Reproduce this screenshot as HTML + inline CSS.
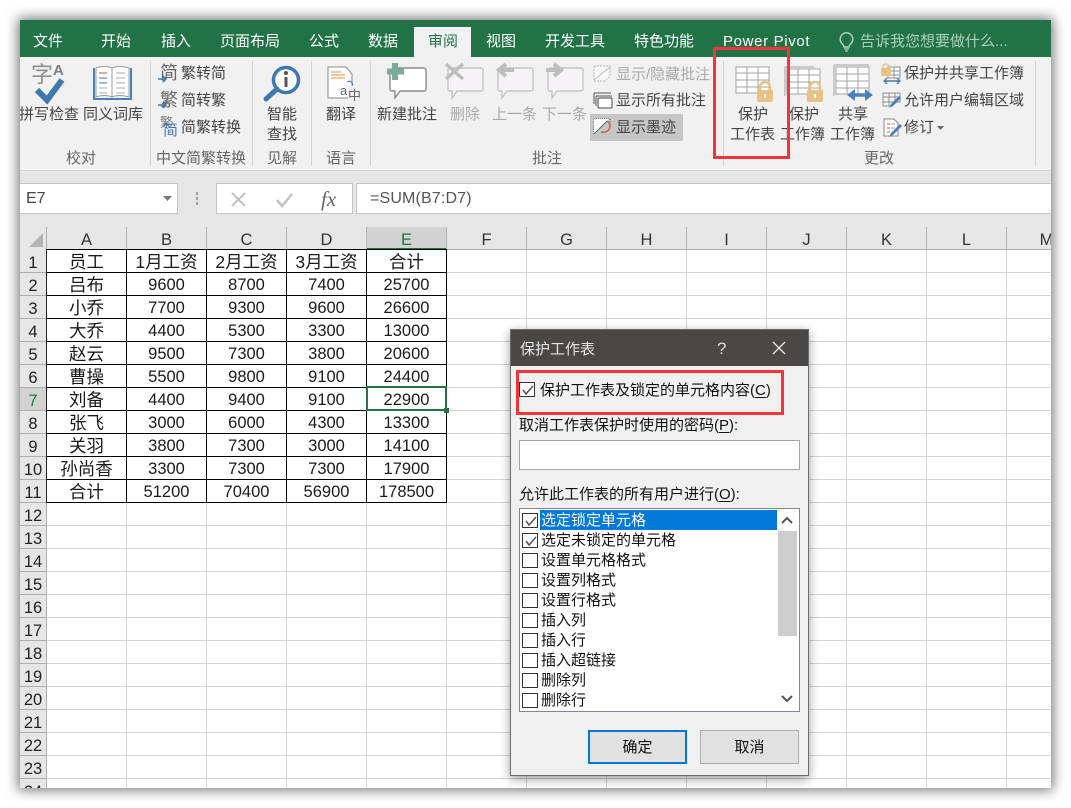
<!DOCTYPE html>
<html lang="zh"><head><meta charset="utf-8">
<style>
html,body{margin:0;padding:0;width:1071px;height:808px;background:#fff;overflow:hidden}
body{font-family:"Liberation Sans","Noto Sans CJK SC",sans-serif;position:relative}
#win{position:absolute;left:20px;top:20px;width:1031px;height:768px;overflow:hidden;background:#fff}
#shadow{position:absolute;left:20px;top:20px;width:1031px;height:768px;box-shadow:0 0 12px 2px rgba(0,0,0,.55)}
.a{position:absolute}
.t{position:absolute;white-space:nowrap;font-size:15px;line-height:20px;color:#444;margin-top:1px}
.g{color:#a9a9a9}
.tab{position:absolute;white-space:nowrap;font-size:15px;line-height:20px;color:#fff;top:12px}
.lab{position:absolute;white-space:nowrap;font-size:15px;line-height:20px;color:#666;top:129px}
.sep{position:absolute;top:41px;height:105px;width:1px;background:#d2d2d2}
.ch{position:absolute;top:207px;height:22px;width:79px;border-right:1px solid #b5b5b5;text-align:center;font-size:16.5px;line-height:26px;color:#333}
.rh{position:absolute;left:0;width:26px;height:22px;border-bottom:1px solid #aeaeae;text-align:center;font-size:16.5px;line-height:26px;color:#222}
#grid{position:absolute;left:27px;top:230px;width:1004px;height:540px;background-image:linear-gradient(to left,#d4d4d4 1px,transparent 1px),linear-gradient(to top,#d4d4d4 1px,transparent 1px);background-size:80px 23px}
#tb{position:absolute;left:26px;top:229px;border-left:1px solid #222;border-top:1px solid #000;display:grid;grid-template-columns:repeat(5,80px);grid-auto-rows:23px;background:#fff}
#tb div{box-sizing:border-box;border-right:1px solid #000;border-bottom:1px solid #000;text-align:center;font-size:16.5px;line-height:25px;color:#1a1a1a}
#tb div.c{font-size:17.5px;line-height:24px}
#dlg{position:absolute;left:510px;top:329px;width:297px;height:445px;border:1px solid #6b6b6b;background:#f0f0f0;box-shadow:0 3px 10px rgba(0,0,0,.4);font-size:15px;color:#111}
#dlg .d{position:absolute;white-space:nowrap;line-height:20px;font-size:15px;color:#111;margin-top:1px}
.cb{position:absolute;box-sizing:border-box;left:11px;width:16px;height:15px;border:1px solid #333;background:#fff}
.cb svg{position:absolute;left:1px;top:0}
.it{position:absolute;left:30px;white-space:nowrap;line-height:20px;font-size:15px;color:#111;margin-top:1px}
u{text-underline-offset:2px}
</style></head><body>
<div id="shadow"></div>
<div id="win">
<div class="a" style="left:0;top:0;width:1031px;height:37px;background:#217346"></div>
<div class="a" style="left:394px;top:7px;width:57px;height:30px;background:#f1f1f1"></div>
<span class="tab" style="left:13px">文件</span>
<span class="tab" style="left:81px">开始</span>
<span class="tab" style="left:141px">插入</span>
<span class="tab" style="left:200px">页面布局</span>
<span class="tab" style="left:289px">公式</span>
<span class="tab" style="left:348px">数据</span>
<span class="tab" style="left:408px;color:#217346">审阅</span>
<span class="tab" style="left:466px">视图</span>
<span class="tab" style="left:525px">开发工具</span>
<span class="tab" style="left:614px">特色功能</span>
<span class="tab" style="left:703px;letter-spacing:.65px">Power Pivot</span>
<span class="tab" style="left:840px;color:#a9d0ba">告诉我您想要做什么...</span>

<div class="a" style="left:0;top:37px;width:1031px;height:113px;background:#f1f1f1;border-bottom:1px solid #d4d4d4"></div>
<div class="a" style="left:0;top:151px;width:1031px;height:78px;background:#e6e6e6"></div>
<div class="sep" style="left:130px"></div><div class="sep" style="left:232px"></div><div class="sep" style="left:291px"></div><div class="sep" style="left:350px"></div><div class="sep" style="left:703px"></div><div class="sep" style="left:1015px"></div>

<span class="t" style="left:-1px;top:84px">拼写检查</span>
<span class="t" style="left:63px;top:84px">同义词库</span>
<span class="t" style="left:161px;top:43px">繁转简</span>
<span class="t" style="left:161px;top:70px">简转繁</span>
<span class="t" style="left:161px;top:97px">简繁转换</span>
<span class="t" style="left:247px;top:84px">智能</span>
<span class="t" style="left:247px;top:104px">查找</span>
<span class="t" style="left:306px;top:84px">翻译</span>
<span class="t" style="left:357px;top:84px">新建批注</span>
<span class="t g" style="left:430px;top:84px">删除</span>
<span class="t g" style="left:472px;top:84px">上一条</span>
<span class="t g" style="left:522px;top:84px">下一条</span>
<div class="a" style="left:570px;top:94px;width:93px;height:27px;background:#c6c6c6"></div>
<span class="t g" style="left:596px;top:44px">显示/隐藏批注</span>
<span class="t" style="left:596px;top:70px">显示所有批注</span>
<span class="t" style="left:596px;top:97px">显示墨迹</span>
<span class="t" style="left:718px;top:84px">保护</span>
<span class="t" style="left:710px;top:104px">工作表</span>
<span class="t" style="left:769px;top:84px">保护</span>
<span class="t" style="left:760px;top:104px">工作簿</span>
<span class="t" style="left:818px;top:84px">共享</span>
<span class="t" style="left:810px;top:104px">工作簿</span>
<span class="t" style="left:884px;top:43px">保护并共享工作簿</span>
<span class="t" style="left:884px;top:70px">允许用户编辑区域</span>
<span class="t" style="left:884px;top:97px">修订</span>
<span class="lab" style="left:46px">校对</span>
<span class="lab" style="left:136px">中文简繁转换</span>
<span class="lab" style="left:247px">见解</span>
<span class="lab" style="left:306px">语言</span>
<span class="lab" style="left:512px">批注</span>
<span class="lab" style="left:844px">更改</span>

<svg class="a" style="left:-20px;top:-20px" width="1071" height="240" viewBox="0 0 1071 240" fill="none">
<!-- bulb -->
<path d="M842.500 44a6.300 6.300 0 1 1 8 0c-1 1-1.500 2-1.500 3h-5c0-1-.5-2-1.500-3z" stroke="#b5d4c3" stroke-width="1.400"/><path d="M844 49h5M845 51h3" stroke="#b5d4c3" stroke-width="1.300"/>
<!-- spelling -->
<text x="31" y="82" font-size="22" fill="#8e8e8e" font-family="Noto Sans CJK SC">字</text>
<text x="53" y="75" font-size="15" font-weight="bold" fill="#808080" font-family="Liberation Sans">A</text>
<path d="M37 90l10 10 15-20" stroke="#3f78ad" stroke-width="6"/>
<!-- book -->
<path d="M94 68v31h37V68" stroke="#4a80b8" stroke-width="2"/><path d="M96 68c5-2 12-2 16 0v29c-4-2-11-2-16 0zM112 68c4-2 11-2 17 0v29c-6-2-13-2-17 0z" fill="#fff" stroke="#9a9a9a"/>
<path d="M99 73h8" stroke="#d2592a"/><path d="M99 78h8M99 83h8" stroke="#3f78ad"/><path d="M99 88h8M99 93h8M116 73h9M116 78h9M116 83h9M116 88h9M116 93h9" stroke="#aaa"/>
<!-- chinese conv -->
<text x="160" y="79" font-size="18" fill="#666" font-family="Noto Sans CJK SC">简</text>
<text x="160" y="106" font-size="18" fill="#666" font-family="Noto Sans CJK SC">繁</text>
<text x="160" y="127" font-size="13" fill="#777" font-family="Noto Sans CJK SC">繁</text>
<text x="163" y="135" font-size="15" fill="#3f78ad" font-family="Noto Sans CJK SC">简</text>
<path d="M158 79h8M163 76l3 3-3 3M158 105h8M163 102l3 3-3 3" stroke="#3f78ad" stroke-width="1.600"/>
<!-- smart lookup -->
<circle cx="286" cy="80" r="12.500" fill="#fff" stroke="#3f78ad" stroke-width="3.500"/>
<path d="M266 99l11-10" stroke="#3f78ad" stroke-width="5" stroke-linecap="round"/>
<circle cx="286" cy="73" r="2" fill="#555"/><path d="M286 77v10" stroke="#555" stroke-width="3"/>
<!-- translate -->
<path d="M328 67h18l6 7v24h-24z" fill="#fff" stroke="#888"/><path d="M331 72h10M331 75h14M331 78h14" stroke="#e08a3c"/>
<path d="M347 82c3-2 5 0 6 3" stroke="#3f78ad"/>
<rect x="348" y="86" width="13" height="14" fill="#f1f1f1"/>
<text x="340" y="95" font-size="13" fill="#666" font-family="Liberation Sans">a</text>
<text x="348" y="100" font-size="13" fill="#666" font-family="Noto Sans CJK SC">中</text>
<!-- comments -->
<path d="M393 68h29a2 2 0 0 1 2 2v19a2 2 0 0 1-2 2h-24l-5 7v-7h-3a2 2 0 0 1-2-2V70" fill="#fff" stroke="#8a8a8a" stroke-width="1.400" transform="translate(2 0)"/>
<path d="M395 63v17M387 71.500h17" stroke="#7cab9b" stroke-width="6"/>
<g stroke="#c6c3c6" stroke-width="1.400" fill="#f5f3f5"><path d="M450 68h31a2 2 0 0 1 2 2v19a2 2 0 0 1-2 2h-24l-5 7v-7h-2a2 2 0 0 1-2-2V70a2 2 0 0 1 2-2z"/><path d="M500 68h31a2 2 0 0 1 2 2v19a2 2 0 0 1-2 2h-24l-5 7v-7h-2a2 2 0 0 1-2-2V70a2 2 0 0 1 2-2z"/><path d="M550 68h31a2 2 0 0 1 2 2v19a2 2 0 0 1-2 2h-24l-5 7v-7h-2a2 2 0 0 1-2-2V70a2 2 0 0 1 2-2z"/></g>
<path d="M446 64l17 15M463 64l-17 15" stroke="#bdbdbd" stroke-width="3.500"/>
<path d="M514 70h-13M506 64l-7 6 7 6" stroke="#bdbdbd" stroke-width="4"/>
<path d="M546 70h13M554 64l7 6-7 6" stroke="#bdbdbd" stroke-width="4"/>
<!-- show/hide -->
<path d="M594 66h16v10l-5 5h-11z" stroke="#b5b5b5" stroke-dasharray="2 1" fill="#f8f8f8"/><path d="M594 80l16-13" stroke="#bbb"/>
<path d="M594 93h17M594 93v11M596 96h16M596 96v10" stroke="#555"/><rect x="598" y="98" width="14" height="10" rx="1" fill="#fff" stroke="#444"/>
<path d="M594 119h16v5M594 119v15" stroke="#555" stroke-dasharray="1 1"/><path d="M594 119h15l-15 15z" fill="#fff"/><path d="M594 134l13-13" stroke="#666"/><path d="M607 121a7 7 0 0 1 3 6c-1 4-5 6-9 5" stroke="#d9552b" stroke-width="1.300"/>
<!-- protect sheet -->
<g stroke="#a3a3a3" fill="#fff"><path d="M736 67h33v26h-33z"/><path d="M736 73h33M736 80h33M736 87h33M747 67v26M758 67v26"/></g>
<g stroke="#a3a3a3"><path d="M785 67h29" /><path d="M785 67v29"/></g>
<g stroke="#a3a3a3" fill="#fff"><path d="M787 69h33v25h-33z"/><path d="M787 75h33M787 82h33M787 88h33M798 69v25M809 69v25"/></g>
<g stroke="#a3a3a3"><path d="M834 65h35M834 65v31"/></g>
<g stroke="#a3a3a3" fill="#fff"><path d="M836 67h33v27h-33z"/><path d="M836 74h33M836 81h33M836 88h33M847 67v27M858 67v27"/></g>
<rect x="757" y="90" width="16" height="12" rx="1.500" fill="#e8c283"/><path d="M760 90v-3a5 5 0 0 1 10 0v3" stroke="#e8c283" stroke-width="2.600"/><path d="M765 94v4" stroke="#fff" stroke-width="2"/>
<rect x="807" y="90" width="16" height="12" rx="1.500" fill="#e8c283"/><path d="M810 90v-3a5 5 0 0 1 10 0v3" stroke="#e8c283" stroke-width="2.600"/><path d="M815 94v4" stroke="#fff" stroke-width="2"/>
<path d="M850 95h20" stroke="#4a80b8" stroke-width="3.500"/><path d="M855 89l-8 6 8 6zM865 89l8 6-8 6z" fill="#4a80b8"/>
<!-- small icons -->
<g stroke="#8f8f8f" fill="#fff"><path d="M888 67h12v11h-12z"/><path d="M888 71h12M888 75h12M894 67v11"/></g>
<rect x="881" y="68" width="10" height="8" rx="1" fill="#e8c283"/><path d="M883 68v-1a3 3 0 0 1 6 0v1" stroke="#e8c283" stroke-width="1.600"/>
<path d="M885 81h14" stroke="#4a80b8" stroke-width="1.600"/><path d="M887 78l-3 3 3 3M897 78l3 3-3 3" stroke="#4a80b8" stroke-width="1.400"/>
<g stroke="#8f8f8f"><path d="M883 93h17v9h-17zM883 97h17M889 93v13M895 93v8M883 93v13h8"/></g>
<path d="M889 109l2-4 8-8 2 2-8 8z" fill="#4a80b8" transform="translate(0 -1)"/>
<path d="M884 119h10l4 4v13h-14z" fill="#fff" stroke="#888"/><path d="M887 124h3M887 128h3M887 132h3" stroke="#d2592a"/><path d="M891 124h4M891 128h4" stroke="#999"/>
<path d="M889 137l2-4 9-9 2 2-9 9z" fill="#4a80b8"/>
<path d="M937 126h7l-3.500 4z" fill="#666"/>
<!-- formula bar dots -->
<path d="M197 192v3M197 197v3M197 202v3" stroke="#a0a0a0" stroke-width="2"/>
</svg>

<!-- formula bar -->
<div class="a" style="left:0;top:163px;width:158px;height:31px;background:#fff;border-right:1px solid #c6c6c6;border-top:1px solid #c6c6c6;border-bottom:1px solid #c6c6c6;box-sizing:border-box"></div>
<div class="a" style="left:196px;top:163px;width:137px;height:31px;background:#fff;border:1px solid #c6c6c6;box-sizing:border-box;z-index:0"></div>
<div class="a" style="left:336px;top:163px;width:695px;height:31px;background:#fff;border:1px solid #c6c6c6;border-right:0;box-sizing:border-box"></div>
<svg class="a" style="left:196px;top:163px" width="137" height="31" viewBox="216 183 137 31" fill="none">
<path d="M232 193l13 13M245 193l-13 13" stroke="#bbb" stroke-width="1.800"/>
<path d="M277 200l5 6 10-12" stroke="#c2c2c2" stroke-width="2.500"/>
<text x="321" y="206" font-size="21" font-style="italic" fill="#666" font-family="Liberation Serif">fx</text>
</svg>
<svg class="a" style="left:140px;top:175px" width="16" height="8"><path d="M3 1h9l-4.500 5z" fill="#777"/></svg>
<span class="t" style="left:6px;top:168px;font-size:16px;color:#444">E7</span>
<span class="t" style="left:350px;top:168px;font-size:16px;color:#555;letter-spacing:.15px">=SUM(B7:D7)</span>

<!-- grid -->
<div id="grid"></div>
<div class="a" style="left:26px;top:207px;width:1005px;height:22px;background:#e6e6e6;border-bottom:1px solid #aeaeae"></div>
<div class="a" style="left:346px;top:207px;width:80px;height:21px;background:#d2d2d2;border-bottom:2px solid #217346"></div>
<div class="a" style="left:0;top:207px;width:26px;height:561px;background:#e6e6e6;border-right:1px solid #aeaeae"></div>
<svg class="a" style="left:8px;top:212px" width="16" height="16"><path d="M15 1v14H1z" fill="#b4b4b4"/></svg>
<div class="ch" style="left:27px">A</div><div class="ch" style="left:107px">B</div><div class="ch" style="left:187px">C</div><div class="ch" style="left:267px">D</div><div class="ch" style="left:347px;color:#217346">E</div><div class="ch" style="left:427px">F</div><div class="ch" style="left:507px">G</div><div class="ch" style="left:587px">H</div><div class="ch" style="left:667px">I</div><div class="ch" style="left:747px">J</div><div class="ch" style="left:827px">K</div><div class="ch" style="left:907px">L</div><div class="ch" style="left:987px">M</div>

<div class="rh" style="top:230px">1</div><div class="rh" style="top:253px">2</div><div class="rh" style="top:276px">3</div><div class="rh" style="top:299px">4</div><div class="rh" style="top:322px">5</div><div class="rh" style="top:345px">6</div><div class="rh" style="top:368px;background:#d2d2d2;color:#217346">7</div><div class="rh" style="top:391px">8</div><div class="rh" style="top:414px">9</div><div class="rh" style="top:437px">10</div><div class="rh" style="top:460px">11</div><div class="rh" style="top:483px">12</div><div class="rh" style="top:506px">13</div><div class="rh" style="top:529px">14</div><div class="rh" style="top:552px">15</div><div class="rh" style="top:575px">16</div><div class="rh" style="top:598px">17</div><div class="rh" style="top:621px">18</div><div class="rh" style="top:644px">19</div><div class="rh" style="top:667px">20</div><div class="rh" style="top:690px">21</div><div class="rh" style="top:713px">22</div><div class="rh" style="top:736px">23</div><div class="rh" style="top:759px">24</div>

<div id="tb">
<div class="c">员工</div><div class="c">1月工资</div><div class="c">2月工资</div><div class="c">3月工资</div><div class="c">合计</div>
<div class="c">吕布</div><div>9600</div><div>8700</div><div>7400</div><div>25700</div>
<div class="c">小乔</div><div>7700</div><div>9300</div><div>9600</div><div>26600</div>
<div class="c">大乔</div><div>4400</div><div>5300</div><div>3300</div><div>13000</div>
<div class="c">赵云</div><div>9500</div><div>7300</div><div>3800</div><div>20600</div>
<div class="c">曹操</div><div>5500</div><div>9800</div><div>9100</div><div>24400</div>
<div class="c">刘备</div><div>4400</div><div>9400</div><div>9100</div><div>22900</div>
<div class="c">张飞</div><div>3000</div><div>6000</div><div>4300</div><div>13300</div>
<div class="c">关羽</div><div>3800</div><div>7300</div><div>3000</div><div>14100</div>
<div class="c">孙尚香</div><div>3300</div><div>7300</div><div>7300</div><div>17900</div>
<div class="c">合计</div><div>51200</div><div>70400</div><div>56900</div><div>178500</div>
</div>
<div class="a" style="left:346px;top:366px;width:81px;height:25px;box-sizing:border-box;border:2px solid #217346"></div>
<div class="a" style="left:424px;top:388px;width:5px;height:5px;background:#217346;border:0"></div>
</div>

<!-- dialog -->
<div id="dlg">
<div class="a" style="left:0;top:0;width:297px;height:36px;background:#4a4846"></div>
<div class="d" style="left:9px;top:9px;color:#e4e4e4">保护工作表</div>
<div class="d" style="left:206px;top:8px;color:#ddd;font-size:17px">?</div>
<svg class="a" style="left:261px;top:11px" width="14" height="14"><path d="M1 1l12 12M13 1L1 13" stroke="#e8e8e8" stroke-width="1.300"/></svg>
<div class="cb" style="left:8px;top:52px"><svg width="14" height="14" fill="none"><path d="M2 7l3 4 7-8" stroke="#555" stroke-width="1.500"/></svg></div>
<div class="d" style="left:29px;top:50px">保护工作表及锁定的单元格内容(<u>C</u>)</div>
<div class="d" style="left:8px;top:85px">取消工作表保护时使用的密码(<u>P</u>):</div>
<div class="a" style="left:8px;top:110px;width:279px;height:28px;background:#fff;border:1px solid #a5a5a5"></div>
<div class="d" style="left:8px;top:154px">允许此工作表的所有用户进行(<u>O</u>):</div>
<div class="a" style="left:8px;top:178px;width:279px;height:202px;background:#fff;border:1px solid #828790">
<div class="a" style="left:20px;top:1px;width:237px;height:20px;background:#0078d7"></div>
<div class="a" style="left:258px;top:22px;width:19px;height:105px;background:#cdcdcd"></div>
<svg class="a" style="left:260px;top:6px" width="14" height="10" fill="none"><path d="M2 8l5-5 5 5" stroke="#555" stroke-width="2"/></svg>
<svg class="a" style="left:260px;top:185px" width="14" height="10" fill="none"><path d="M2 2l5 5 5-5" stroke="#555" stroke-width="2"/></svg>
<div class="cb" style="left:2px;top:4px"><svg width="14" height="14" fill="none"><path d="M2 7l3 4 7-8" stroke="#555" stroke-width="1.500"/></svg></div><div class="it" style="left:21px;top:1px;color:#fff">选定锁定单元格</div>
<div class="cb" style="left:2px;top:24px"><svg width="14" height="14" fill="none"><path d="M2 7l3 4 7-8" stroke="#555" stroke-width="1.500"/></svg></div><div class="it" style="left:21px;top:21px">选定未锁定的单元格</div>
<div class="cb" style="left:2px;top:44px"></div><div class="it" style="left:21px;top:41px">设置单元格格式</div>
<div class="cb" style="left:2px;top:64px"></div><div class="it" style="left:21px;top:61px">设置列格式</div>
<div class="cb" style="left:2px;top:84px"></div><div class="it" style="left:21px;top:81px">设置行格式</div>
<div class="cb" style="left:2px;top:104px"></div><div class="it" style="left:21px;top:101px">插入列</div>
<div class="cb" style="left:2px;top:124px"></div><div class="it" style="left:21px;top:121px">插入行</div>
<div class="cb" style="left:2px;top:144px"></div><div class="it" style="left:21px;top:141px">插入超链接</div>
<div class="cb" style="left:2px;top:164px"></div><div class="it" style="left:21px;top:161px">删除列</div>
<div class="cb" style="left:2px;top:184px"></div><div class="it" style="left:21px;top:181px">删除行</div>
</div>
<div class="a" style="left:77px;top:400px;width:95px;height:30px;background:#e1e1e1;border:2px solid #0078d7;text-align:center;line-height:32px;color:#111">确定</div>
<div class="a" style="left:189px;top:400px;width:97px;height:32px;background:#e1e1e1;border:1px solid #adadad;text-align:center;line-height:34px;color:#111">取消</div>
</div>

<!-- red highlight boxes -->
<div class="a" style="left:713px;top:47px;width:71px;height:106px;border:3px solid #f2353a"></div>
<div class="a" style="left:516px;top:370px;width:262px;height:39px;border:3px solid #f2353a"></div>
</body></html>
